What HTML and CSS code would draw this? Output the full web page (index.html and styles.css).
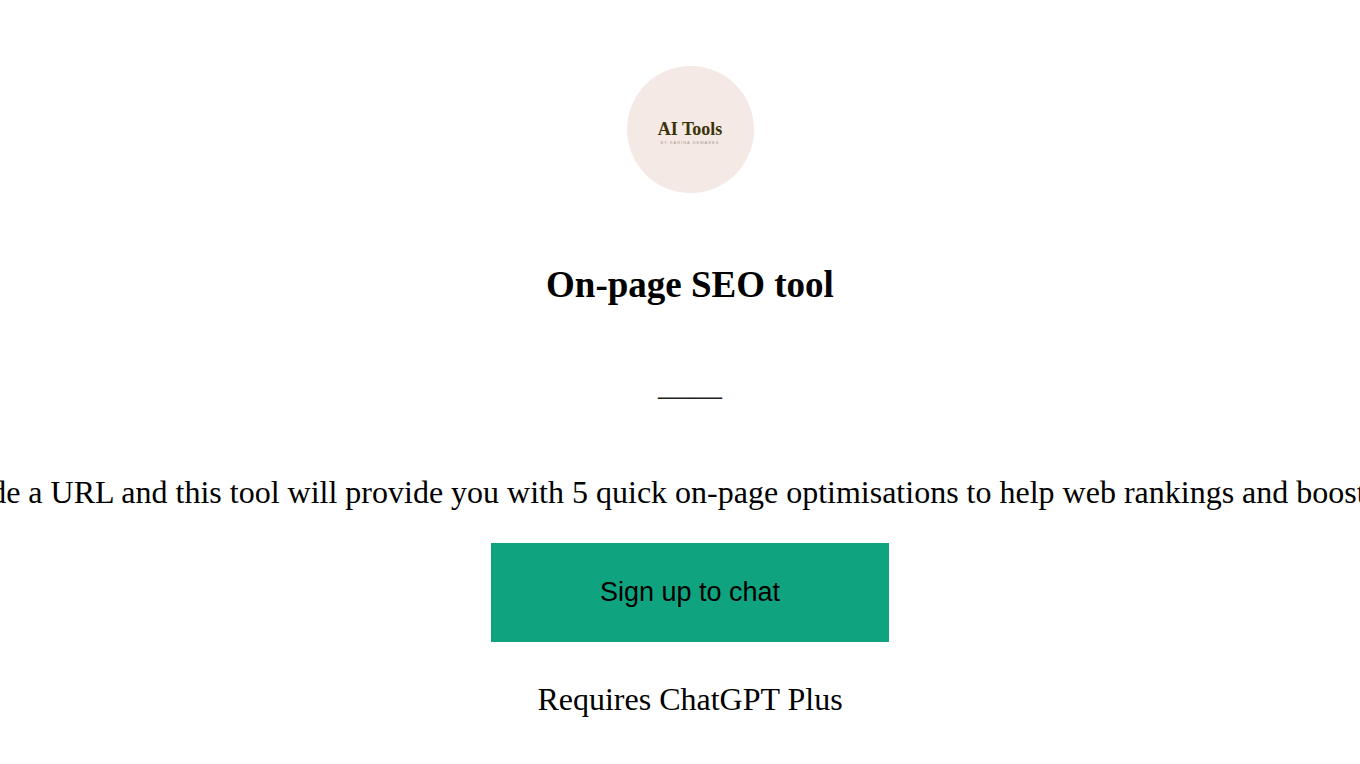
FILE: index.html
```html
<!DOCTYPE html>
<html lang="en">
<head>
    <meta charset="UTF-8">
    <meta name="viewport" content="width=device-width, initial-scale=1.0">
    <title>On-page SEO tool</title>
    <link rel="stylesheet" href="styles.css">
</head>
<body>
    <main class="tool">
        <div class="logo">
            <span class="logo-name">AI Tools</span>
            <span class="logo-author">BY KARINA DEMARES</span>
        </div>
        <h1 class="title">On-page SEO tool</h1>
        <div class="divider">——</div>
        <p class="description">Provide a URL and this tool will provide you with 5 quick on-page optimisations to help web rankings and boost traffic.</p>
        <button class="signup" type="button">Sign up to chat</button>
        <p class="note">Requires ChatGPT Plus</p>
    </main>
</body>
</html>
```

FILE: styles.css
```css
body {
    margin: 0;
    background-color: white;
    color: black;
    font-family: "Liberation Serif", "Times New Roman", serif;
    font-size: 32px;
    line-height: 36px;
    overflow: hidden;
}

.tool {
    display: flex;
    flex-direction: column;
    align-items: center;
    padding: 66px 0 40px 20px;
}

.logo {
    display: flex;
    flex-direction: column;
    align-items: center;
    justify-content: center;
    box-sizing: border-box;
    width: 127px;
    height: 127px;
    padding-top: 8px;
    border-radius: 50%;
    background-color: #f4e9e4;
}

.logo-name {
    color: #3a3408;
    font-size: 18px;
    font-weight: bold;
    line-height: 18px;
}

.logo-author {
    color: #a89a90;
    font-family: "Liberation Sans", Arial, sans-serif;
    font-size: 4px;
    letter-spacing: 1px;
    line-height: 10px;
}

.title {
    margin: 74px 0 0;
    font-size: 37px;
    line-height: 36px;
}

.divider {
    margin-top: 74px;
    color: #222;
}

.description {
    margin: 61px 0 0;
    white-space: nowrap;
}

.signup {
    margin-top: 33px;
    padding: 34px 109px;
    border: none;
    background-color: #10a37f;
    color: black;
    font-family: "Liberation Sans", Arial, sans-serif;
    font-size: 27px;
    line-height: 31px;
    cursor: pointer;
}

.note {
    margin: 39px 0 0;
}
```
